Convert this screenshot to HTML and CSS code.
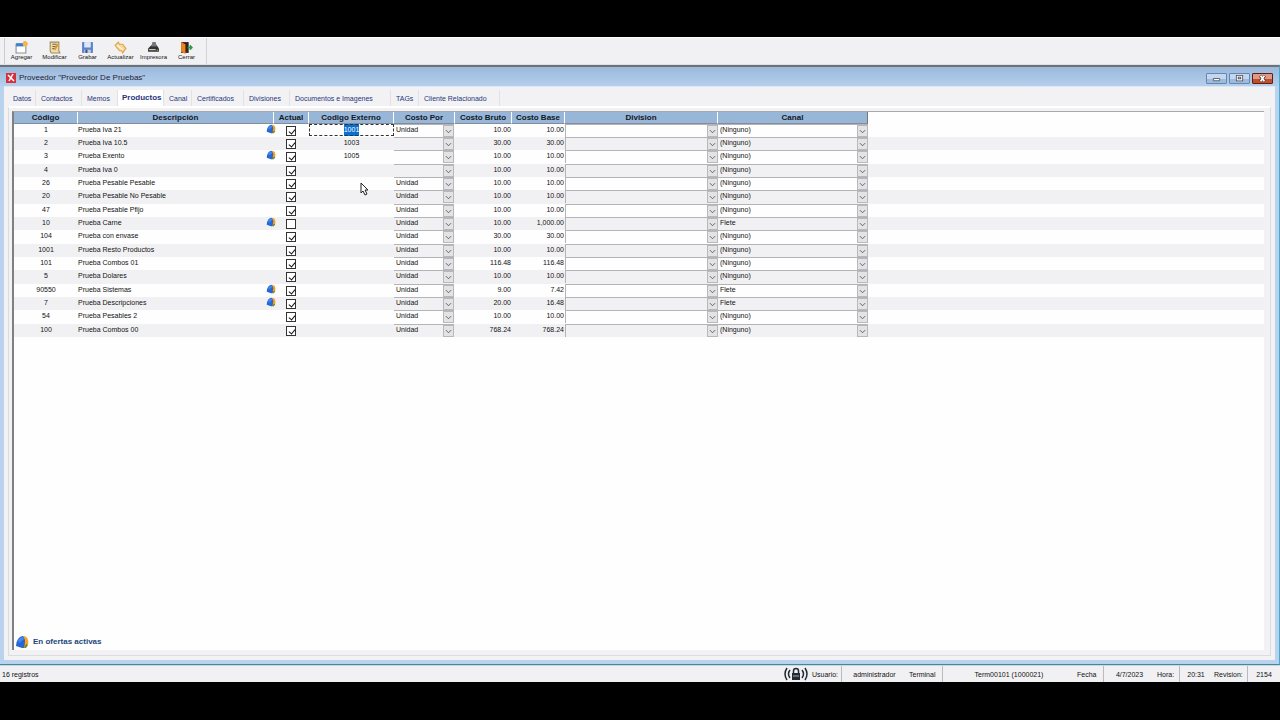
FILE: index.html
```
<!DOCTYPE html>
<html lang="es">
<head>
<meta charset="utf-8">
<title>Proveedor "Proveedor De Pruebas"</title>
<link rel="stylesheet" href="styles.css">
</head>
<body>
<svg class="defs" aria-hidden="true">
  <symbol id="offer" viewBox="0 0 14 14">
    <path d="M8 1q4 0 5 4t-1 6l-3 2H8z" fill="#f7a325"/>
    <path d="M8 3l2 3-1 7H7z" fill="#d9352a"/>
    <path d="M11 9l2 1-2 3H9z" fill="#4a9a3a"/>
    <path d="M3 4q2-3 5-3l2 4-1 7-2 1-6-2q0-4 2-7z" fill="#2468d8"/>
    <path d="M3 5q2-3 5-3l1 2-5 4z" fill="#4388ee"/>
  </symbol>
  <symbol id="chevron" viewBox="0 0 8 8"><path d="M1 3l3 3 3-3" fill="none" stroke="#555"/></symbol>
</svg>
<div class="screen">
  <header class="toolbar">
    <button class="tool"><svg viewBox="0 0 12 12"><path d="M1 3h9v8H1z" fill="#fff" stroke="#8a8f99"/><path d="M1 2h7v3H1z" fill="#3f7fd0"/><path d="M8 0h2l2 2-1 3H8L7 2z" fill="#f3b74d"/></svg>Agregar</button>
    <button class="tool"><svg viewBox="0 0 12 12"><path d="M2 1h8v8l1 2H3L2 9z" fill="#ecdcae" stroke="#a58c58"/><path d="M4 3h4M4 5h4M4 7h3" stroke="#756849"/><path d="M9 3L6 8" stroke="#d59d32" stroke-width="2"/></svg>Modificar</button>
    <button class="tool"><svg viewBox="0 0 12 12"><path d="M1 1h10v10H1z" fill="#5b82cc"/><path d="M3 1h6v5H3z" fill="#dce8f8"/><path d="M3 8h6v3H3z" fill="#c3cfe2"/><path d="M4 8h2v3H4z" fill="#456"/></svg>Grabar</button>
    <button class="tool"><svg viewBox="0 0 12 12"><path d="M1 4l3-3 1 2h3l3 4-3 4-1-2H5z" fill="#f8d699" stroke="#e0a244"/><path d="M3 4l5 4" stroke="#fff"/></svg>Actualizar</button>
    <button class="tool"><svg viewBox="0 0 12 12"><path d="M1 7l3-3h5l2 3v3H1z" fill="#333"/><path d="M5 1h3l1 4H4z" fill="#777"/><path d="M2 8h6" stroke="#ddd"/><path d="M9 8h1v1H9z" fill="#e6c23a"/></svg>Impresora</button>
    <button class="tool"><svg viewBox="0 0 12 12"><path d="M1 1h7v10H1z" fill="#322"/><path d="M1 1l4 2v9l-4-2z" fill="#ed8519"/><path d="M7 6h4M9 4l2 2-2 2" fill="none" stroke="#2b9b4b" stroke-width="1.500"/></svg>Cerrar</button>
  </header>
  <main class="window">
    <div class="titlebar">
      <svg class="logo" viewBox="0 0 10 10"><path d="M0 0h10v10H0z" fill="#d6303c"/><path d="M2 2l6 6M7 1L3 8" stroke="#fff" stroke-width="1.500"/></svg>
      <h1>Proveedor "Proveedor De Pruebas"</h1>
      <div class="winbuttons">
        <button aria-label="Minimizar"><svg viewBox="0 0 20 10"><path d="M6.500 5h7v2.500h-7z" fill="#fff" stroke="#556"/></svg></button>
        <button aria-label="Restaurar"><svg viewBox="0 0 20 10"><path d="M7.500 2.500h5v4h-5z" fill="none" stroke="#445" stroke-width="3"/><path d="M7.500 2.500h5v4h-5z" fill="none" stroke="#fff" stroke-width="1.200"/></svg></button>
        <button class="close" aria-label="Cerrar ventana"><svg viewBox="0 0 20 10"><path d="M7.500 2l5 6M12.500 2l-5 6" stroke="#533" stroke-width="3.400"/><path d="M8 2l4 6M12 2L8 8" stroke="#fff" stroke-width="2"/></svg></button>
      </div>
    </div>
    <div class="client">
      <nav class="tabs" role="tablist">
        <button role="tab" class="t-datos">Datos</button>
        <button role="tab" class="t-contactos">Contactos</button>
        <button role="tab" class="t-memos">Memos</button>
        <button role="tab" class="t-productos active" aria-selected="true">Productos</button>
        <button role="tab" class="t-canal">Canal</button>
        <button role="tab" class="t-certificados">Certificados</button>
        <button role="tab" class="t-divisiones">Divisiones</button>
        <button role="tab" class="t-documentos">Documentos e Imagenes</button>
        <button role="tab" class="t-tags">TAGs</button>
        <button role="tab" class="t-cliente">Cliente Relacionado</button>
      </nav>
      <section class="page">
        <div class="grid">
          <table>
            <colgroup><col class="c-code"><col class="c-desc"><col class="c-act"><col class="c-ext"><col class="c-por"><col class="c-bruto"><col class="c-base"><col class="c-div"><col class="c-canal"><col></colgroup>
            <thead><tr><th>Código</th><th>Descripción</th><th>Actual</th><th>Codigo Externo</th><th>Costo Por</th><th>Costo Bruto</th><th>Costo Base</th><th>Division</th><th>Canal</th><td></td></tr></thead>
            <tbody id="rows"></tbody>
          </table>
          <p class="legend"><svg><use href="#offer"/></svg>En ofertas activas</p>
        </div>
      </section>
    </div>
    <svg class="pointer" viewBox="0 0 9 14"><path d="M1 1v10l2-2 2 4 2-1-2-4h3z" fill="#fff" stroke="#222"/></svg>
  </main>
  <footer class="status">
    <span class="count">16 registros</span>
    <svg class="lock" viewBox="0 0 24 14"><path d="M8 6h8v7H8z" fill="#222b33"/><path d="M9.500 6V4a2.500 2.500 0 0 1 5 0v2" fill="none" stroke="#222b33" stroke-width="1.500"/><path d="M9 9h6" stroke="#aaa"/><path d="M3 1q-4 6 0 12M6 3q-3 4 0 8M21 1q4 6 0 12M18 3q3 4 0 8" fill="none" stroke="#222b33" stroke-width="1.500"/></svg>
    <span class="s-user">Usuario:</span><span class="box s-name">administrador</span>
    <span class="s-term">Terminal</span><span class="box s-termid">Term00101 (1000021)</span>
    <span class="s-date">Fecha</span><span class="box s-day">4/7/2023</span>
    <span class="s-hour">Hora:</span><span class="box s-time">20:31</span>
    <span class="s-rev">Revision:</span><span class="box s-num">2154</span>
  </footer>
</div>
<script src="app.js"></script>
</body>
</html>
```
FILE: styles.css
```
* { box-sizing: border-box; }
body {
  margin: 0;
  background: #000;
  font: 7px/10px "Liberation Sans", Arial, sans-serif;
  color: #111;
}
button, input, select { font: inherit; color: inherit; margin: 0; padding: 0; border: 0; background: none; }
.defs { position: absolute; width: 0; height: 0; }
.screen { height: 100vh; padding: 37px 0 38px; display: flex; flex-direction: column; }

.toolbar { flex: none; height: 28px; display: flex; align-items: stretch; background: #f1f1f4; border-top: 1px solid #fff; border-bottom: 1px solid #e0e0e0; padding-left: 4px; }
.toolbar::before { content: ""; border-left: 1px solid #ccc; }
.toolbar::after { content: ""; margin-left: 3px; border-left: 1px solid #d4d4d8; }
.tool { width: 33px; display: flex; flex-direction: column; align-items: center; justify-content: flex-end; font-size: 6px; line-height: 7px; padding-bottom: 3px; }
.tool svg { width: 13px; height: 13px; }

.window { position: relative; flex: 1; min-height: 0; display: flex; flex-direction: column; background: #b9d3ee; border-top: 2px solid #6d7278; border-right: 1px solid #45a9d0; border-bottom: 1px solid #3b8ba5; padding: 0 4px 4px; }
.titlebar { flex: none; height: 19px; display: flex; align-items: center; gap: 3px; margin: 0 -4px; padding: 3px 5px 0 6px; background: linear-gradient(#9bb9dc, #b5cfec); }
.logo { width: 10px; height: 10px; }
h1 { margin: 0; font-size: 8px; font-weight: 400; line-height: 12px; color: #223; }
.winbuttons { margin-left: auto; display: flex; gap: 2px; padding-right: 1px; }
.winbuttons button { width: 21px; height: 11px; border: 1px solid #6487b0; background: linear-gradient(#c3d8ef 50%, #9dbbdc 50%); border-radius: 1px; }
.winbuttons .close { border-color: #5d1f1a; background: linear-gradient(#dd9a86 50%, #c44e28 50%); }
.winbuttons svg { display: block; width: 100%; height: 100%; }

.client { flex: 1; min-height: 0; display: flex; flex-direction: column; background: #f2f2f4; border-top: 1px solid #dce8f5; padding: 3px 4px 4px; }
.tabs { flex: none; height: 16px; display: flex; align-items: stretch; }
.tabs button { padding: 2px 0 0 5px; text-align: left; color: #28347c; border-right: 1px solid #e2e2e6; white-space: nowrap; }
.tabs .active { background: #fff; font-size: 8px; font-weight: 700; padding: 0 0 0 4px; }
.t-datos { width: 28px; }
.t-contactos { width: 46px; }
.t-memos { width: 36px; }
.t-productos { width: 46px; }
.t-canal { width: 28px; }
.t-certificados { width: 52px; }
.t-divisiones { width: 46px; }
.t-documentos { width: 101px; }
.t-tags { width: 28px; }
.t-cliente { width: 81px; }
.page { flex: 1; min-height: 0; display: flex; border: 1px solid #dcdce0; border-top: 2px solid #fff; padding: 3px 6px 5px 3px; }
.grid { flex: 1; min-width: 0; display: flex; flex-direction: column; background: #fefefe; border-left: 2px solid #808080; border-top: 1px solid #a8a8aa; }

table { width: 100%; border-collapse: separate; border-spacing: 0; table-layout: fixed; }
.c-code { width: 64px; } .c-desc { width: 196px; } .c-act { width: 35px; } .c-ext { width: 85px; } .c-por { width: 61px; }
.c-bruto { width: 57px; } .c-base { width: 53px; } .c-div { width: 153px; } .c-canal { width: 150px; }
th, td { padding: 0; }
th { height: 12px; font-size: 8px; line-height: 11px; background: #98b6d8; border-right: 1px solid #fff; border-bottom: 1px solid #848c98; color: #101828; white-space: nowrap; }
th:nth-child(9) { border-right: 1px solid #777; }
tbody tr { height: 13px; }
tbody tr:nth-child(3n) { height: 14px; }
tbody tr:nth-child(even) { background: #f1f1f4; }
td { white-space: nowrap; vertical-align: top; line-height: 12px; }
.center { text-align: center; }
.num { text-align: right; padding-right: 1px; }
.desc { display: flex; justify-content: space-between; }
.desc svg { width: 10px; height: 10px; margin: 0 -2px 0 0; }
input[type="checkbox"] { display: block; appearance: none; width: 10px; height: 10px; margin: 2px auto 0 12px; border: 1px solid #333; background: #fff; }
input[type="checkbox"]:checked::before { content: ""; display: block; width: 3px; height: 5px; margin: 1px 0 0 3px; border: solid #111; border-width: 0 1px 1px 0; transform: rotate(40deg); }
.ext { display: block; width: 100%; height: 12px; text-align: center; }
.ext:focus { outline: 1px dashed #333; outline-offset: -1px; }
.ext::selection { background: #0a6fd0; color: #fff; }
.combo { display: flex; height: 13px; border-top: 1px solid #b4b4b8; }
.combo select { flex: 1; min-width: 0; appearance: none; padding-left: 2px; line-height: 9px; height: 9px; border-radius: 0; }
.combo svg { flex: none; width: 11px; height: 12px; padding: 1px; background: #e3e3e5; border: 1px solid #b8b8bc; }
.por { padding-right: 1px; }
.divi .combo { border-left: 1px solid #b4b4b8; }
.legend { margin: auto 0 0; padding: 0 0 1px 1px; display: flex; align-items: center; gap: 4px; font-size: 8px; font-weight: 700; color: #23477c; }
.legend svg { width: 14px; height: 14px; }
.pointer { position: absolute; left: 360px; top: 115px; width: 9px; height: 14px; }

.status { flex: none; height: 17px; display: flex; align-items: stretch; background: #f1f1f4; border-top: 1px solid #d4d4d6; line-height: 18px; }
.count { flex: 1; padding-left: 2px; }
.status span { white-space: nowrap; }
.lock { width: 24px; height: 14px; margin: 1px 4px 0 0; }
.box { border-left: 1px solid #bbb; text-align: center; }
.s-user { width: 29px; }
.s-name { width: 66px; }
.s-term { width: 35px; padding-left: 2px; }
.s-termid { width: 133px; }
.s-date { width: 28px; padding-left: 2px; }
.s-day { width: 52px; }
.s-hour { width: 24px; padding-left: 2px; }
.s-time { width: 33px; }
.s-rev { width: 35px; padding-left: 2px; }
.s-num { width: 33px; }
```
FILE: app.js
```
const UNITS = ["", "Unidad"];
const products = [
  [1, "Prueba Iva 21", 1, 1, "1001", 1, "10.00", "10.00", "(Ninguno)"],
  [2, "Prueba Iva 10.5", 0, 1, "1003", 0, "30.00", "30.00", "(Ninguno)"],
  [3, "Prueba Exento", 1, 1, "1005", 0, "10.00", "10.00", "(Ninguno)"],
  [4, "Prueba Iva 0", 0, 1, "", 0, "10.00", "10.00", "(Ninguno)"],
  [26, "Prueba Pesable Pesable", 0, 1, "", 1, "10.00", "10.00", "(Ninguno)"],
  [20, "Prueba Pesable No Pesable", 0, 1, "", 1, "10.00", "10.00", "(Ninguno)"],
  [47, "Prueba Pesable Pfijo", 0, 1, "", 1, "10.00", "10.00", "(Ninguno)"],
  [10, "Prueba Carne", 1, 0, "", 1, "10.00", "1,000.00", "Flete"],
  [104, "Prueba con envase", 0, 1, "", 1, "30.00", "30.00", "(Ninguno)"],
  [1001, "Prueba Resto Productos", 0, 1, "", 1, "10.00", "10.00", "(Ninguno)"],
  [101, "Prueba Combos 01", 0, 1, "", 1, "116.48", "116.48", "(Ninguno)"],
  [5, "Prueba Dolares", 0, 1, "", 1, "10.00", "10.00", "(Ninguno)"],
  [90550, "Prueba Sistemas", 1, 1, "", 1, "9.00", "7.42", "Flete"],
  [7, "Prueba Descripciones", 1, 1, "", 1, "20.00", "16.48", "Flete"],
  [54, "Prueba Pesables 2", 0, 1, "", 1, "10.00", "10.00", "(Ninguno)"],
  [100, "Prueba Combos 00", 0, 1, "", 1, "768.24", "768.24", "(Ninguno)"]
];
const combo = (label, value) =>
  `<div class="combo"><select aria-label="${label}"><option>${value}</option></select><svg viewBox="0 0 8 8"><use href="#chevron"/></svg></div>`;
document.getElementById("rows").innerHTML = products.map(([code, name, offer, active, ext, unit, gross, base, channel]) => `
  <tr>
    <td class="center">${code}</td>
    <td><div class="desc">${name}${offer ? '<svg><use href="#offer"/></svg>' : ""}</div></td>
    <td><input type="checkbox" aria-label="Actual ${name}"${active ? " checked" : ""}></td>
    <td><input class="ext" type="text" aria-label="Codigo externo ${name}" value="${ext}"></td>
    <td class="por">${combo("Costo por", UNITS[unit])}</td>
    <td class="num">${gross}</td>
    <td class="num">${base}</td>
    <td class="divi">${combo("Division", "")}</td>
    <td>${combo("Canal", channel)}</td>
    <td></td>
  </tr>`).join("");
document.querySelector(".ext").select();
```
